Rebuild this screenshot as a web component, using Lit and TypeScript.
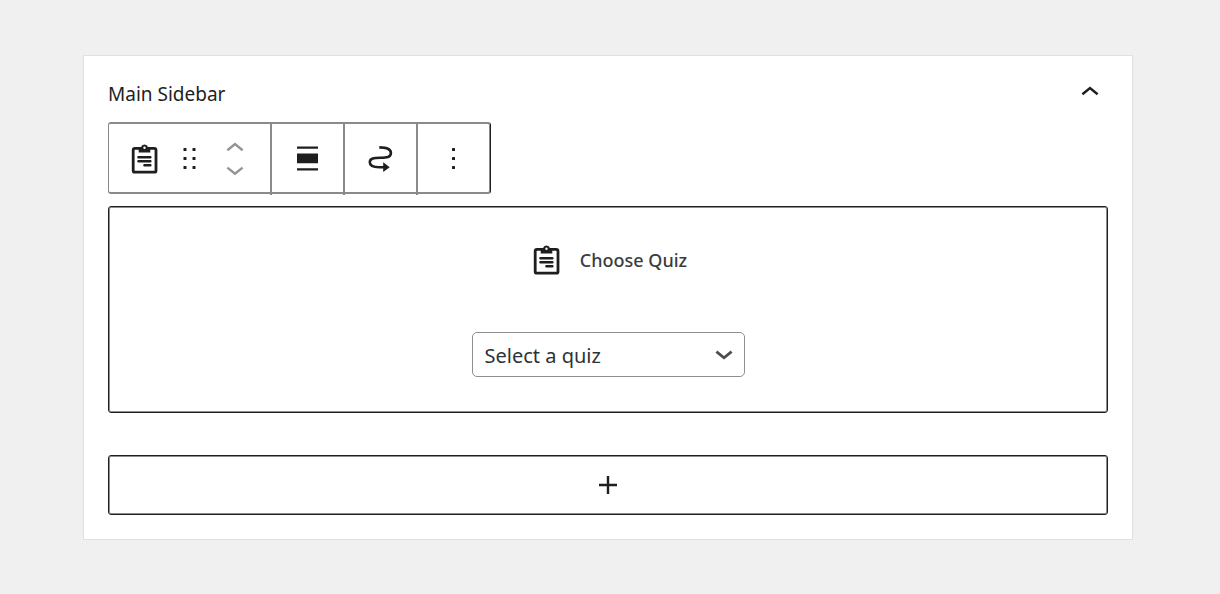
import { LitElement, html, css, svg } from "lit";
import { customElement, state } from "lit/decorators.js";

const clipboard = html`<svg width="28" height="32" viewBox="0 0 28 32" aria-hidden="true">
  <rect x="2.2" y="5.4" width="22.8" height="23.8" rx="1.8" fill="none" stroke="#1e1e1e" stroke-width="2.8" />
  <path d="M7.7 4.2h2.2a3.8 3.8 0 0 1 7.2 0h2.2V9.400H7.700z" fill="#1e1e1e" />
  <circle cx="13.5" cy="4.8" r="1.2" fill="#fff" />
  <path d="M7.4 14.2h12M7.4 18.2h12M13.4 22.2h6" stroke="#1e1e1e" stroke-width="2.4" stroke-linecap="round" />
</svg>`;

const dots = (xs: number[], ys: number[]) =>
  xs.map((x) => ys.map((y) => svg`<rect x=${x - 1.5} y=${y - 1.5} width="3" height="3" rx="0.6" fill="#1e1e1e" />`));

const chevron = (up: boolean, color: string, width: number) => html`<svg
  width="18" height="10" viewBox="0 0 18 10" aria-hidden="true">
  <path d=${up ? "M1.4 8.2 9 2l7.6 6.2" : "M1.4 1.6 9 7.800l7.600-6.200"} fill="none" stroke=${color} stroke-width=${width} />
</svg>`;

@customElement("app-root")
export class AppRoot extends LitElement {
  static styles = css`
    :host {
      display: block;
      box-sizing: border-box;
      min-height: 100vh;
      padding: 55px 87px 54px 83px;
      background: #f0f0f0;
      color: #1e1e1e;
      font-family: "Noto Sans", "Open Sans", sans-serif;
    }
    * { box-sizing: border-box; }
    svg { display: block; }
    button {
      display: flex;
      align-items: center;
      justify-content: center;
      margin: 0;
      padding: 0;
      border: 0;
      background: none;
      color: inherit;
      cursor: pointer;
    }
    .panel {
      padding: 24px;
      background: #fff;
      border: 1px solid #e0e0e0;
    }
    .header {
      display: flex;
      justify-content: space-between;
      align-items: flex-start;
      margin-bottom: 14px;
    }
    .title {
      margin: 0;
      font-size: 19px;
      font-weight: 400;
      line-height: 28px;
    }
    .toggle { width: 36px; height: 22px; }
    .toolbar {
      display: flex;
      width: max-content;
      height: 72px;
      margin-bottom: 12px;
      border: 2px solid #8a8a8a;
      border-left-width: 1px;
      border-radius: 3px;
      box-shadow: inset -1px 0 #8a8a8a;
      border-right: 1px solid #1e1e1e;
    }
    .group {
      display: flex;
      margin-bottom: -3px;
      padding: 1px 0 3px;
      border-right: 2px solid #8a8a8a;
    }
    .group:first-child { padding-left: 13px; padding-right: 13px; }
    .group:last-child { border-right: 0; padding-right: 1px; }
    .tool { width: 71px; }
    .small { width: 45px; }
    .movers {
      display: flex;
      flex-direction: column;
      justify-content: center;
      gap: 4px;
      width: 45px;
    }
    .mover { height: 20px; }
    .frame {
      border: 1px solid #1e1e1e;
      border-radius: 3px;
      box-shadow: inset 0 0 0 1px #8e8e8e;
    }
    .block {
      display: flex;
      flex-direction: column;
      align-items: center;
      gap: 56px;
      height: 207px;
      margin-bottom: 42px;
      padding-top: 37px;
    }
    .label {
      display: flex;
      align-items: center;
      gap: 19px;
      padding-left: 4px;
      color: #3c3c3c;
      font-size: 18px;
      font-weight: 500;
      line-height: 32px;
    }
    .picker {
      display: grid;
      align-items: center;
      width: 273px;
    }
    .picker > * { grid-area: 1 / 1; }
    .picker svg {
      justify-self: end;
      margin-right: 12px;
      pointer-events: none;
    }
    .select {
      appearance: none;
      width: 100%;
      height: 45px;
      padding: 2px 36px 0 12px;
      border: 1px solid #8c8f94;
      border-radius: 5px;
      background: #fff;
      color: #2c3338;
      font: 400 20px/30px "Noto Sans", "Open Sans", sans-serif;
    }
    .adder { width: 100%; height: 60px; }
  `;

  @state() private open = true;

  render() {
    return html`<main class="panel">
      <header class="header">
        <h2 class="title">Main Sidebar</h2>
        <button class="toggle" aria-label="Toggle panel" aria-expanded=${this.open} @click=${() => (this.open = !this.open)}>
          ${chevron(this.open, "#1e1e1e", 2.4)}
        </button>
      </header>
      ${this.open ? this.content() : ""}
    </main>`;
  }

  private content() {
    return html`
      <div class="toolbar" role="toolbar" aria-label="Block tools">
        <div class="group">
          <button class="small" aria-label="Quiz">${clipboard}</button>
          <button class="small" aria-label="Drag">
            <svg width="15" height="23" viewBox="0 0 15 23">${dots([3, 12], [2.5, 11.5, 20.5])}</svg>
          </button>
          <div class="movers">
            <button class="mover" aria-label="Move up">${chevron(true, "#949494", 2.4)}</button>
            <button class="mover" aria-label="Move down">${chevron(false, "#949494", 2.4)}</button>
          </div>
        </div>
        <div class="group">
          <button class="tool" aria-label="Align">
            <svg width="21" height="25" viewBox="0 0 21 25" fill="#1e1e1e">
              <path d="M0 .6h21v2.2H0zM0 7.6h21v9.6H0zM0 22.2h21v2.2H0z" />
            </svg>
          </button>
        </div>
        <div class="group">
          <button class="tool" aria-label="Transfer">
            <svg width="25" height="29" viewBox="0 -1 25 29">
              <path d="M11.3 2.4c6.500 0 11.600 1.600 11.600 5.600 0 4.400-4.400 4.700-10.600 4.800C6.300 12.900 1.800 13 1.800 17.300c0 3.700 4 4.900 9.400 4.900H17" fill="none" stroke="#1e1e1e" stroke-width="2.600" />
              <path d="M15.200 17.200v9.900l6.500-4.900z" fill="#1e1e1e" />
            </svg>
          </button>
        </div>
        <div class="group">
          <button class="tool" aria-label="Options">
            <svg width="5" height="23" viewBox="0 0 5 23">${dots([2.5], [2.5, 11.5, 20.5])}</svg>
          </button>
        </div>
      </div>
      <section class="block frame">
        <label class="label" for="quiz">${clipboard}Choose Quiz</label>
        <div class="picker">
          <select class="select" id="quiz"><option>Select a quiz</option></select>
          ${chevron(false, "#4a4e52", 2.8)}
        </div>
      </section>
      <button class="adder frame" aria-label="Add block">
        <svg width="18" height="18" viewBox="0 0 18 18">
          <path d="M9 0v18M0 9h18" stroke="#1e1e1e" stroke-width="2.400" />
        </svg>
      </button>`;
  }
}
